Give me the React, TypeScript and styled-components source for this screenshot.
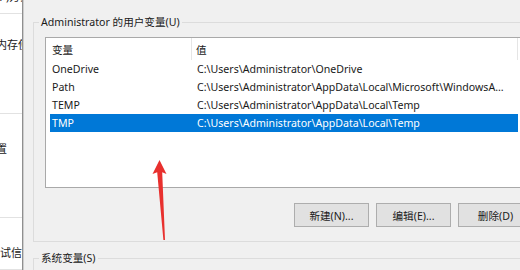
import styled, { createGlobalStyle } from "styled-components";

const GlobalStyle = createGlobalStyle`
  html, body {
    margin: 0;
    padding: 0;
    background: #f0f0f0;
    overflow: hidden;
  }
  body {
    font-family: "Noto Sans", "Noto Sans CJK SC", sans-serif;
    font-size: 10.6px;
    color: #000;
  }
`;

const S = {
  Page: styled.div`
    position: relative;
    display: flex;
    width: 520px;
    height: 270px;
    overflow: hidden;
    background: #f0f0f0;
  `,
  Side: styled.div`
    flex: none;
    width: 22px;
    display: flex;
    flex-direction: column;
    background: #fff;
    border-right: 1px solid #8f8f8f;
    box-shadow: 1px 0 0 #cdcdcd;
    overflow: hidden;
  `,
  SideSection: styled.div<{ $h?: number; $top: number }>`
    flex: ${(p) => (p.$h ? "none" : "1")};
    height: ${(p) => (p.$h ? `${p.$h}px` : "auto")};
    padding-top: ${(p) => p.$top}px;
    border-bottom: 1px solid #e2e2e2;
    box-sizing: border-box;
    white-space: nowrap;
    line-height: 16px;
    font-size: 11px;
    color: #1a1a1a;
  `,
  SideText: styled.div<{ $shift: number }>`
    margin-left: ${(p) => p.$shift}px;
  `,
  Main: styled.div`
    flex: 1;
    min-width: 0;
    padding: 14px 0 0 10px;
    display: flex;
    flex-direction: column;
  `,
  Group: styled.fieldset<{ $gap?: number }>`
    margin: ${(p) => p.$gap ?? 0}px 0 0 0;
    padding: 7px 0 14px 11px;
    width: 520px;
    flex: none;
    border: 1px solid #dcdcdc;
    box-sizing: border-box;
  `,
  Legend: styled.legend`
    margin-left: -6px;
    padding: 0 2px;
    line-height: 16px;
    color: #1a1a1a;
  `,
  List: styled.div`
    width: 488px;
    height: 151px;
    box-sizing: border-box;
    border: 1px solid #a9a9a9;
    background: #fff;
  `,
  Header: styled.div`
    display: flex;
    height: 22px;
    align-items: stretch;
  `,
  HeaderCell: styled.div<{ $w: number; $pad: number }>`
    width: ${(p) => p.$w}px;
    flex: none;
    padding-left: ${(p) => p.$pad}px;
    box-sizing: border-box;
    display: flex;
    align-items: center;
    border-right: 1px solid #e5e5e5;
    color: #1a1a1a;
  `,
  Row: styled.div<{ $selected?: boolean }>`
    display: flex;
    align-items: center;
    width: 468px;
    height: 18px;
    margin-left: 4px;
    background: ${(p) => (p.$selected ? "#0078d7" : "transparent")};
    color: ${(p) => (p.$selected ? "#fff" : "#1a1a1a")};
  `,
  NameCell: styled.div`
    width: 142px;
    flex: none;
    padding-left: 2px;
    box-sizing: border-box;
    white-space: nowrap;
  `,
  ValueCell: styled.div`
    flex: 1;
    min-width: 0;
    padding: 0 12px 0 5px;
    white-space: nowrap;
    overflow: hidden;
    text-overflow: ellipsis;
  `,
  Buttons: styled.div`
    display: flex;
    justify-content: flex-end;
    gap: 7px;
    width: 488px;
    margin-top: 15px;
  `,
  Button: styled.button`
    width: 75px;
    height: 24px;
    padding: 0;
    background: #e1e1e1;
    border: 1px solid #adadad;
    font-family: inherit;
    font-size: 10.6px;
    color: #1a1a1a;
  `,
  Arrow: styled.svg`
    position: absolute;
    left: 150px;
    top: 158px;
    pointer-events: none;
  `,
};

const rows = [
  { name: "OneDrive", value: "C:\\Users\\Administrator\\OneDrive" },
  {
    name: "Path",
    value:
      "C:\\Users\\Administrator\\AppData\\Local\\Microsoft\\WindowsApps;C:\\Program Files",
  },
  { name: "TEMP", value: "C:\\Users\\Administrator\\AppData\\Local\\Temp" },
  { name: "TMP", value: "C:\\Users\\Administrator\\AppData\\Local\\Temp" },
];

export default function App() {
  return (
    <>
      <GlobalStyle />
      <S.Page>
        <S.Side>
          <S.SideSection $h={14} $top={0}>
            <S.SideText $shift={-4} style={{ marginTop: -11 }}>
              (P)方式
            </S.SideText>
          </S.SideSection>
          <S.SideSection $h={100} $top={23}>
            <S.SideText $shift={-4}>内存使用</S.SideText>
          </S.SideSection>
          <S.SideSection $h={104} $top={27}>
            <S.SideText $shift={-15}>设置</S.SideText>
          </S.SideSection>
          <S.SideSection $top={27}>
            <S.SideText $shift={-11}>调试信息</S.SideText>
          </S.SideSection>
        </S.Side>

        <S.Main>
          <S.Group>
            <S.Legend>Administrator 的用户变量(U)</S.Legend>
            <S.List>
              <S.Header>
                <S.HeaderCell $w={146} $pad={6}>变量</S.HeaderCell>
                <S.HeaderCell $w={326} $pad={4}>值</S.HeaderCell>
              </S.Header>
              {rows.map((r) => (
                <S.Row key={r.name} $selected={r.name === "TMP"}>
                  <S.NameCell>{r.name}</S.NameCell>
                  <S.ValueCell>{r.value}</S.ValueCell>
                </S.Row>
              ))}
            </S.List>
            <S.Buttons>
              <S.Button>新建(N)...</S.Button>
              <S.Button>编辑(E)...</S.Button>
              <S.Button>删除(D)</S.Button>
            </S.Buttons>
          </S.Group>
          <S.Group $gap={8}>
            <S.Legend>系统变量(S)</S.Legend>
          </S.Group>
        </S.Main>

        <S.Arrow width="20" height="86" viewBox="0 0 20 86">
          <polygon
            points="9.5,2 2.5,16 7.2,14.2 13.4,82 15,82 12.2,14.2 16.5,16"
            fill="#e8302e"
          />
        </S.Arrow>
      </S.Page>
    </>
  );
}
